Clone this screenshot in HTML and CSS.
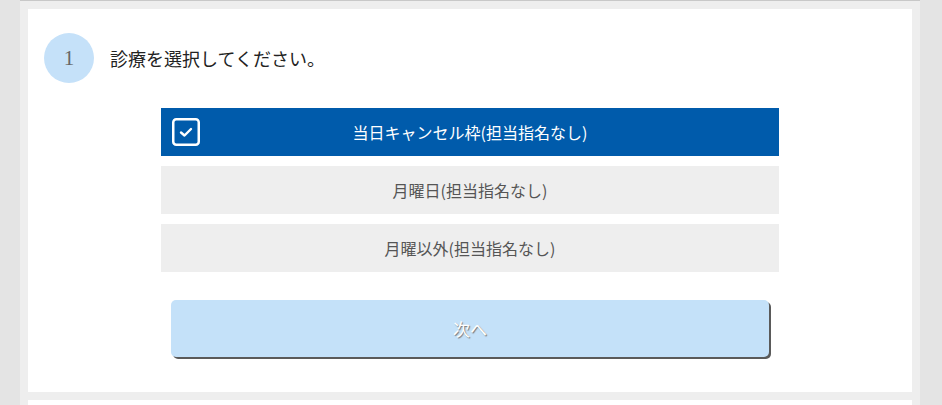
FILE: index.html
```html
<!doctype html>
<html lang="ja">
 <head>
  <meta charset="utf-8">
  <title>診療選択</title>
  <link rel="stylesheet" href="styles.css">
 </head>
 <body>
  <div class="page">
   <div class="card">
    <div class="step">
     <div class="step-num">1</div>
     <div class="step-title">診療を選択してください。</div>
    </div>
    <div class="choices">
     <div class="choice selected">
      <span class="check">
       <svg width="28" height="28" viewBox="0 0 28 28">
        <rect x="1.25" y="1.25" width="25.5" height="25.5" rx="3" fill="none" stroke="#fff" stroke-width="2.5"/>
        <path d="M9 14.5 L12.5 17.5 L19 11" fill="none" stroke="#fff" stroke-width="2.4" stroke-linecap="round" stroke-linejoin="round"/>
       </svg>
      </span>
      当日キャンセル枠(担当指名なし)
     </div>
     <div class="choice">月曜日(担当指名なし)</div>
     <div class="choice">月曜以外(担当指名なし)</div>
    </div>
    <button class="btn-next" disabled>次へ</button>
   </div>
   <div class="card card-next"></div>
  </div>
 </body>
</html>
```

FILE: styles.css
```css
body {
  margin: 0;
  background-color: #e4e4e4;
  font-family: "Noto Sans CJK JP", "Noto Sans", sans-serif;
}

.page {
  width: 900px;
  margin-left: 20px;
  padding: 8px 8px 0;
  box-sizing: border-box;
  background-color: #eeeeee;
  border-top: 1px solid #c8c8c8;
}

.card {
  background-color: #fff;
  padding: 24px 16px 35px;
}

.card-next {
  margin-top: 8px;
  padding: 0;
  height: 5px;
}

.step {
  display: flex;
  align-items: center;
  gap: 16px;
}

.step-num {
  width: 50px;
  height: 50px;
  border-radius: 50%;
  background-color: #c5e1f9;
  color: #666;
  font-family: "Liberation Serif", serif;
  font-size: 21px;
  display: flex;
  align-items: center;
  justify-content: center;
}

.step-title {
  font-size: 18px;
  color: #222;
}

.choices {
  width: 618px;
  margin: 25px auto 0;
  display: flex;
  flex-direction: column;
  gap: 10px;
}

.choice {
  position: relative;
  height: 48px;
  display: flex;
  align-items: center;
  justify-content: center;
  background-color: #eeeeee;
  color: #555;
  font-size: 16px;
}

.choice.selected {
  background-color: #005bab;
  color: #fff;
}

.check {
  position: absolute;
  left: 11px;
  top: 10px;
  width: 28px;
  height: 28px;
}

.check svg {
  display: block;
}

.btn-next {
  display: block;
  width: 598px;
  height: 57px;
  margin: 28px auto 0;
  border: none;
  border-radius: 5px;
  background-color: #c4e1f9;
  box-shadow: 2px 2px 0 #5a5a5a;
  color: #fff;
  font-family: "Noto Sans CJK JP", sans-serif;
  font-size: 17px;
  text-shadow: 1px 1px 1px #777;
}
```
